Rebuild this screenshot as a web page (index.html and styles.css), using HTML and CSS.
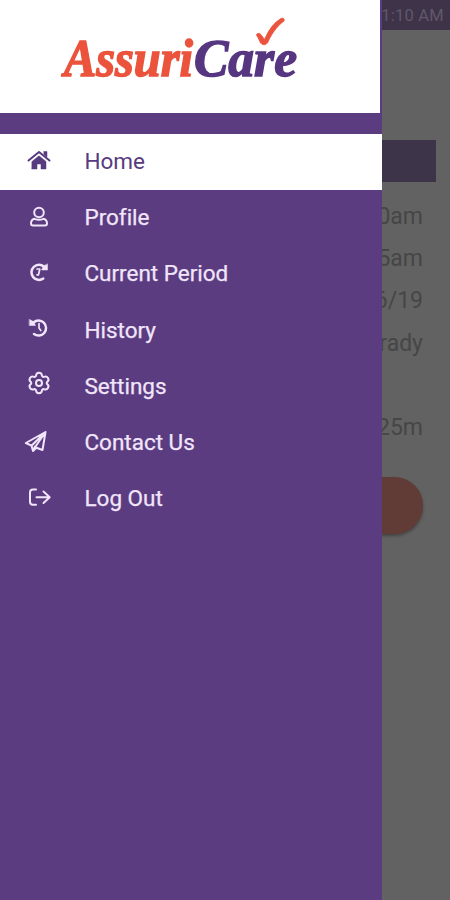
FILE: index.html
```html
<!DOCTYPE html>
<html lang="en">
<head>
<meta charset="utf-8">
<title>AssuriCare</title>
<link rel="stylesheet" href="styles.css">
</head>
<body>
<div class="app">
  <main class="page">
    <div class="status">11:10 AM</div>
    <div class="banner"></div>
    <div class="values">
      <div>10:20am</div>
      <div>10:25am</div>
      <div>6/16/19</div>
      <div>Brady</div>
      <div></div>
      <div>25m</div>
    </div>
    <div class="action"></div>
  </main>
  <aside class="drawer">
    <header class="brand">
      <svg width="260" height="112" viewBox="50 0 260 112">
        <g class="word">
          <text class="red" x="64" y="75.5" textLength="129" lengthAdjust="spacingAndGlyphs">Assuri</text>
          <text class="purple" x="194" y="75.5" textLength="103" lengthAdjust="spacingAndGlyphs">Care</text>
        </g>
        <path class="tick" d="M256.500 34.500Q259 31.500 262 36L264.500 39.500Q271 24 281 18.500Q285 17.500 284 21C276 27 271 35 267.500 43Q264 46.500 260.500 43Q259 39 256.500 35Z"/>
      </svg>
    </header>
    <nav class="menu">
      <a class="item active"><svg class="icon" viewBox="0 0 28 28"><path d="M3.500 14.500L14 6L24.500 14.500"/><path class="fill" d="M7 15.500L14 9.800L21 15.500V23H16V18H12V23H7ZM19 5.500H22V11L19 8.500Z"/></svg><span>Home</span></a>
      <a class="item"><svg class="icon" viewBox="0 0 28 28"><circle cx="14" cy="10.500" r="4.800"/><path d="M9.500 16.800C6.800 17.600 6 19 6 21.500Q6 23.500 8 23.500H20Q22 23.500 22 21.500C22 19 21.200 17.600 18.500 16.800Q14 18.800 9.500 16.800Z"/></svg><span>Profile</span></a>
      <a class="item"><svg class="icon" viewBox="0 0 28 28"><path class="thick" d="M19 8.800A7.500 7.500 0 1 0 18.300 20.500"/><path class="fill" d="M22.500 6.200V12H16.500L18.500 8Z"/><path class="hand" d="M12 11H14.800L13.500 16.800H12"/></svg><span>Current Period</span></a>
      <a class="item"><svg class="icon" viewBox="0 0 28 28"><path class="thick" d="M8.500 8.500A7.500 7.500 0 1 1 9 20"/><path class="fill" d="M4.500 5.500L8.500 7.500L10.500 11.500H4.500Z"/><path class="hand" d="M14 9.500V14L15.800 16.500"/></svg><span>History</span></a>
      <a class="item"><svg class="icon gear" viewBox="0 0 28 28"><path d="M11 6.800C11.300 2.800 16.700 2.800 17 6.800Q17.500 8 18.800 7.900C22.500 6.200 25.200 10.900 22 13.100Q21.300 14 22 14.900C25.200 17.100 22.500 21.800 18.800 20.100Q17.500 20 17 21.200C16.700 25.200 11.300 25.200 11 21.200Q10.500 20 9.200 20.100C5.500 21.800 2.800 17.100 6 14.900Q6.700 14 6 13.100C2.800 10.900 5.500 6.200 9.200 7.900Q10.500 8 11 6.800Z"/><circle cx="14" cy="14" r="3"/></svg><span>Settings</span></a>
      <a class="item"><svg class="icon plane" viewBox="0 0 28 28"><path d="M20.500 5L.8 16L6.500 18.700L8 24L11.500 20.800L17.500 23ZM6.500 18.700L20.500 5L10 20.200M8 24L10 19.500"/></svg><span>Contact Us</span></a>
      <a class="item"><svg class="icon" viewBox="0 0 28 28"><path d="M11 6.500H8Q5 6.500 5 9.500V18.800Q5 21.800 8 21.800H11M11.500 14.200H24.500M18.500 8.500L24.700 14.200L18.500 20"/></svg><span>Log Out</span></a>
    </nav>
  </aside>
</div>
</body>
</html>
```
FILE: styles.css
```css
body {
  margin: 0;
  font-family: Roboto, sans-serif;
}
.app {
  position: relative;
  width: 450px;
  height: 900px;
  overflow: hidden;
  background: #626262;
}
.page {
  color: #464646;
}
.status {
  height: 30px;
  padding-right: 6px;
  box-sizing: border-box;
  background: #3e3349;
  color: #61586a;
  font-size: 16.5px;
  line-height: 32px;
  letter-spacing: .25px;
  text-align: right;
}
.banner {
  height: 42px;
  margin: 110px 14px 0;
  background: #3d3449;
}
.values {
  padding: 14px 27px 0;
  font-size: 23px;
  text-align: right;
}
.values div {
  height: 42.2px;
  line-height: 42px;
}
.action {
  height: 57px;
  margin: 28px 27px 0;
  border-radius: 29px;
  background: #613c36;
  box-shadow: 0 2px 3px #444;
}
.drawer {
  position: absolute;
  top: 0;
  left: 0;
  width: 382px;
  height: 900px;
  background: #5b3c80;
}
.brand {
  width: 380px;
  height: 113px;
  padding-left: 50px;
  box-sizing: border-box;
  background: #fff;
}
.brand svg {
  display: block;
}
.word {
  font: italic bold 52px "Liberation Serif", serif;
  stroke-width: 1.5;
}
.red {
  fill: #eb533c;
  stroke: #eb533c;
}
.purple {
  fill: #573681;
  stroke: #573681;
}
.tick {
  fill: #eb533c;
  stroke: #eb533c;
  stroke-width: .8;
}
.menu {
  margin-top: 21px;
}
.item {
  display: flex;
  align-items: center;
  height: 56.2px;
  padding-left: 25px;
  color: #f1e5fa;
  font-size: 22.5px;
}
.item.active {
  background: #fff;
  color: #573a80;
}
.item span {
  margin: -2px 0 0 32px;
  letter-spacing: -.02px;
  -webkit-text-stroke: .25px currentColor;
}
.item.active span {
  -webkit-text-stroke-width: 0;
}
.icon {
  width: 28px;
  height: 28px;
  margin: -5px 0 0 -.5px;
  overflow: visible;
  fill: none;
  stroke: currentColor;
  stroke-width: 2;
  stroke-linecap: round;
  stroke-linejoin: round;
}
.icon .thick {
  stroke-width: 2.500;
}
.icon .hand {
  stroke-width: 1.700;
}
.icon .fill {
  fill: currentColor;
  stroke-width: .5;
}
.gear {
  margin-top: -7px;
}
```
